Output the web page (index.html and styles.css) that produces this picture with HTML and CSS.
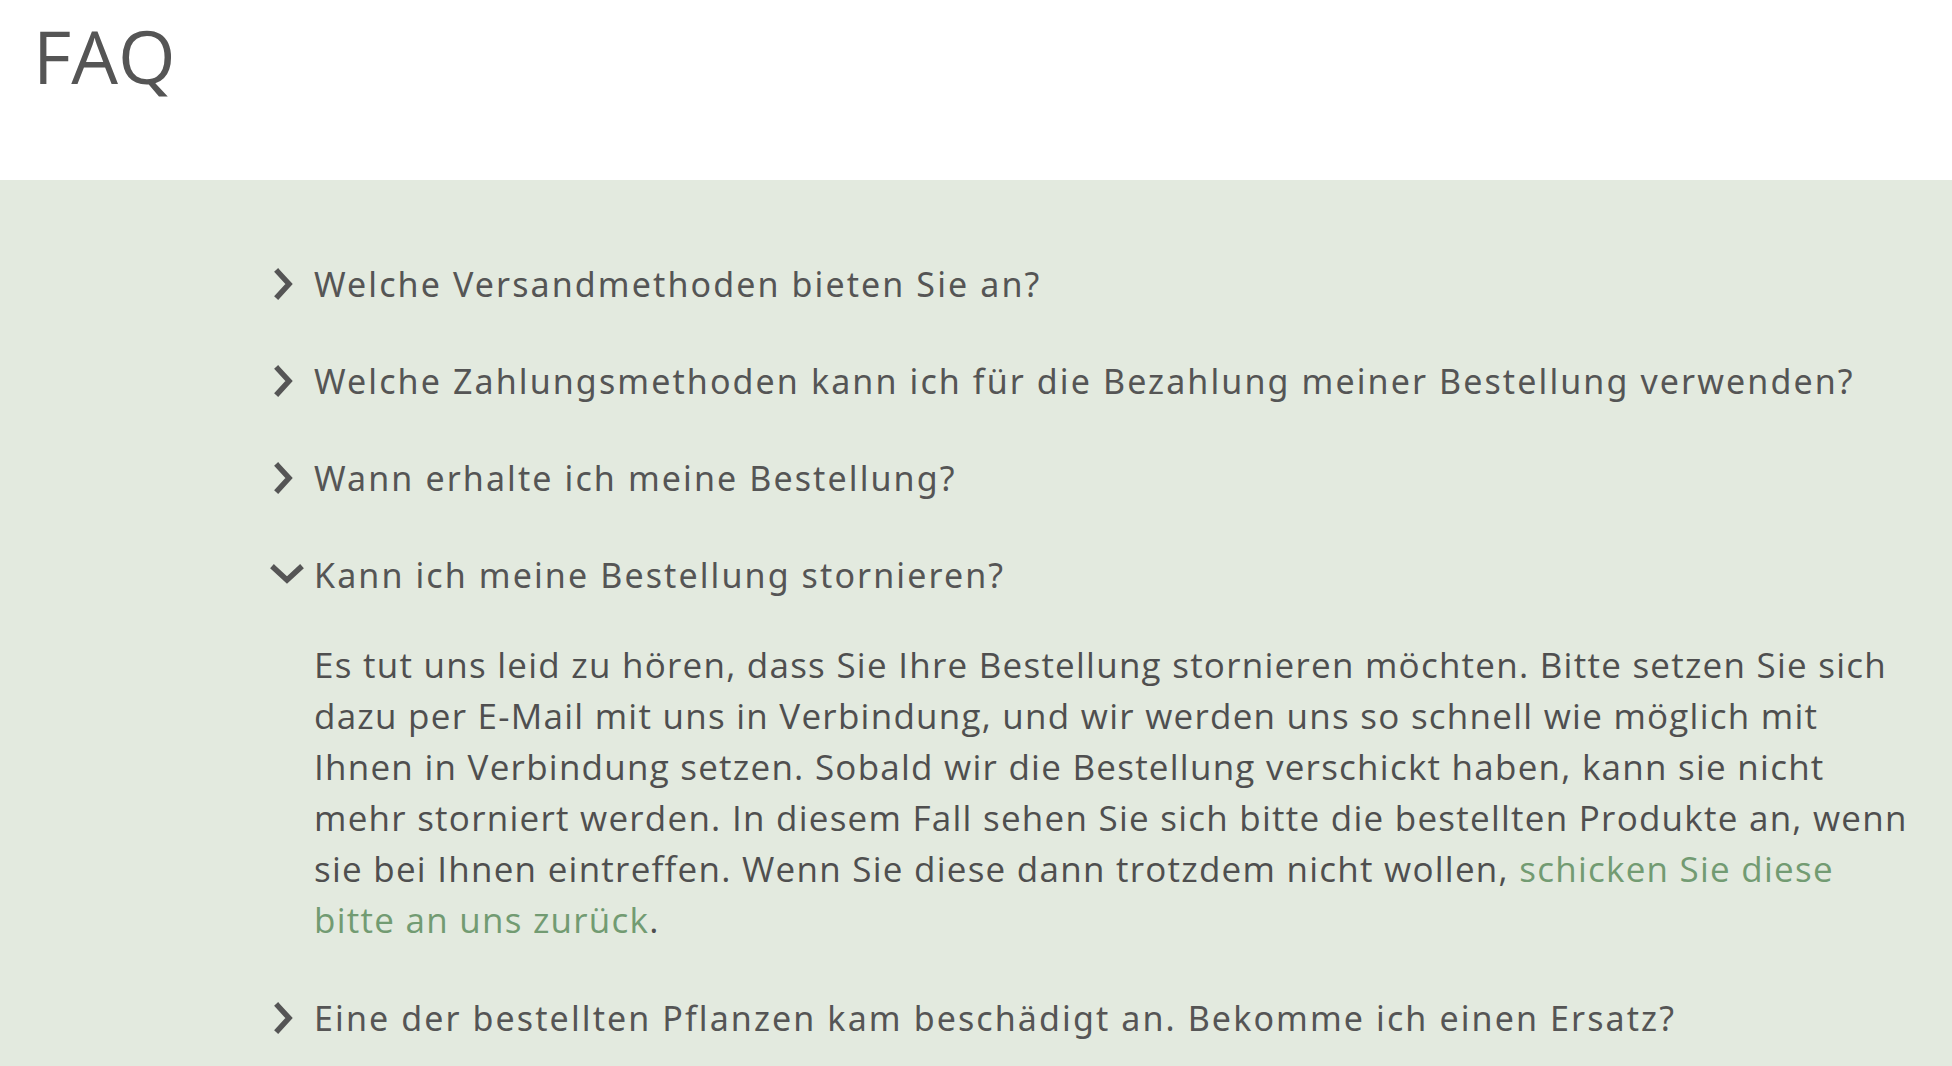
FILE: index.html
```html
<!DOCTYPE html>
<html lang="de">
<head>
<meta charset="utf-8">
<title>FAQ</title>
<link rel="stylesheet" href="styles.css">
</head>
<body>
<header class="top">
  <h1 class="title">FAQ</h1>
</header>
<main class="band">
  <div class="faq">
    <div class="item">
      <div class="q"><span class="ico"><svg viewBox="0 0 20 32" width="20" height="32"><path d="M4 4 L15 16 L4 28" fill="none" stroke="#555" stroke-width="5.5" stroke-linecap="square"/></svg></span><span class="qt">Welche Versandmethoden bieten Sie an?</span></div>
    </div>
    <div class="item">
      <div class="q"><span class="ico"><svg viewBox="0 0 20 32" width="20" height="32"><path d="M4 4 L15 16 L4 28" fill="none" stroke="#555" stroke-width="5.5" stroke-linecap="square"/></svg></span><span class="qt">Welche Zahlungsmethoden kann ich für die Bezahlung meiner Bestellung verwenden?</span></div>
    </div>
    <div class="item">
      <div class="q"><span class="ico"><svg viewBox="0 0 20 32" width="20" height="32"><path d="M4 4 L15 16 L4 28" fill="none" stroke="#555" stroke-width="5.5" stroke-linecap="square"/></svg></span><span class="qt">Wann erhalte ich meine Bestellung?</span></div>
    </div>
    <div class="item open">
      <div class="q"><span class="ico down"><svg viewBox="0 0 34 22" width="34" height="22"><path d="M4 4 L17 16 L30 4" fill="none" stroke="#555" stroke-width="5.5" stroke-linecap="square"/></svg></span><span class="qt">Kann ich meine Bestellung stornieren?</span></div>
      <p class="a">Es tut uns leid zu hören, dass Sie Ihre Bestellung stornieren möchten. Bitte setzen Sie sich dazu per E-Mail mit uns in Verbindung, und wir werden uns so schnell wie möglich mit Ihnen in Verbindung setzen. Sobald wir die Bestellung verschickt haben, kann sie nicht mehr storniert werden. In diesem Fall sehen Sie sich bitte die bestellten Produkte an, wenn sie bei Ihnen eintreffen. Wenn Sie diese dann trotzdem nicht wollen, <a class="link" href="#">schicken Sie diese bitte an uns zurück</a>.</p>
    </div>
    <div class="item">
      <div class="q"><span class="ico"><svg viewBox="0 0 20 32" width="20" height="32"><path d="M4 4 L15 16 L4 28" fill="none" stroke="#555" stroke-width="5.5" stroke-linecap="square"/></svg></span><span class="qt">Eine der bestellten Pflanzen kam beschädigt an. Bekomme ich einen Ersatz?</span></div>
    </div>
  </div>
</main>
</body>
</html>
```

FILE: styles.css
```css
html, body {
  margin: 0;
  padding: 0;
}
body {
  background: #e3eadf;
  color: #535353;
  font-family: "Open Sans", sans-serif;
}
.top {
  background: #ffffff;
  height: 180px;
  padding: 0 0 0 33px;
  box-sizing: border-box;
}
.title {
  margin: 0;
  padding-top: 19px;
  font-family: "Open Sans", sans-serif;
  font-weight: 400;
  font-size: 74px;
  line-height: 1;
  color: #555555;
}
.band {
  background: #e3eadf;
  padding: 55px 0 40px 270px;
}
.faq {
  width: 1650px;
}
.q {
  display: flex;
  align-items: center;
  height: 97px;
}
.ico {
  width: 44px;
  display: flex;
  align-items: center;
  padding-left: 4px;
  box-sizing: border-box;
}
.ico.down {
  padding-left: 0;
}
.qt {
  font-family: "Noto Sans", sans-serif;
  font-size: 34px;
  letter-spacing: 2.1px;
  color: #555555;
}
.a {
  width: 1605px;
  margin: 16px 0 24px 44px;
  font-size: 35px;
  line-height: 51px;
  letter-spacing: 1.25px;
  font-weight: 500;
  color: #4f4f4f;
}
.link {
  color: #729b72;
  text-decoration: none;
}
```
